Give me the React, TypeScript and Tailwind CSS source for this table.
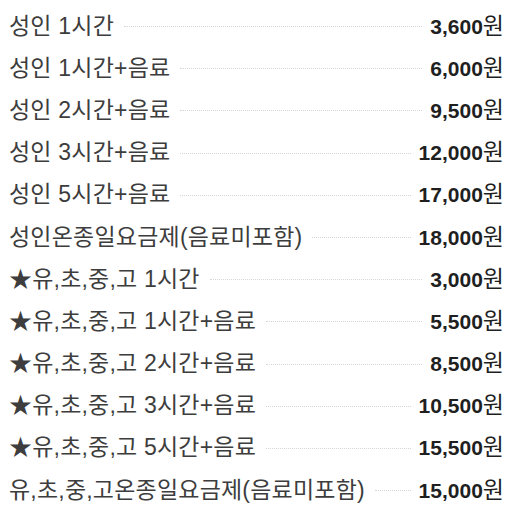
const items: [string, string][] = [
  ['성인 1시간', '3,600'],
  ['성인 1시간+음료', '6,000'],
  ['성인 2시간+음료', '9,500'],
  ['성인 3시간+음료', '12,000'],
  ['성인 5시간+음료', '17,000'],
  ['성인온종일요금제(음료미포함)', '18,000'],
  ['★유,초,중,고 1시간', '3,000'],
  ['★유,초,중,고 1시간+음료', '5,500'],
  ['★유,초,중,고 2시간+음료', '8,500'],
  ['★유,초,중,고 3시간+음료', '10,500'],
  ['★유,초,중,고 5시간+음료', '15,500'],
  ['유,초,중,고온종일요금제(음료미포함)', '15,000'],
];

export default function App() {
  return (
    <div className="min-h-screen w-[513px] bg-white pl-[9px] pr-[9px] pt-[5px] font-['Liberation_Sans','Noto_Sans_CJK_KR',sans-serif]">
      <ul>
        {items.map(([label, price]) => (
          <li key={label} className="flex h-[42.2px] items-center">
            <span className="whitespace-nowrap text-[23px] tracking-[0.2px] leading-none text-[#3d3d3d]">{label}</span>
            <span className="mt-[1px] mr-2 ml-2.5 flex-1 border-t border-dotted border-[#d6d6d6]" />
            <span className="whitespace-nowrap text-[21px] leading-none font-bold text-[#1f1f1f]">
              {price}
              <span className="text-[23px] font-normal">원</span>
            </span>
          </li>
        ))}
      </ul>
    </div>
  );
}
